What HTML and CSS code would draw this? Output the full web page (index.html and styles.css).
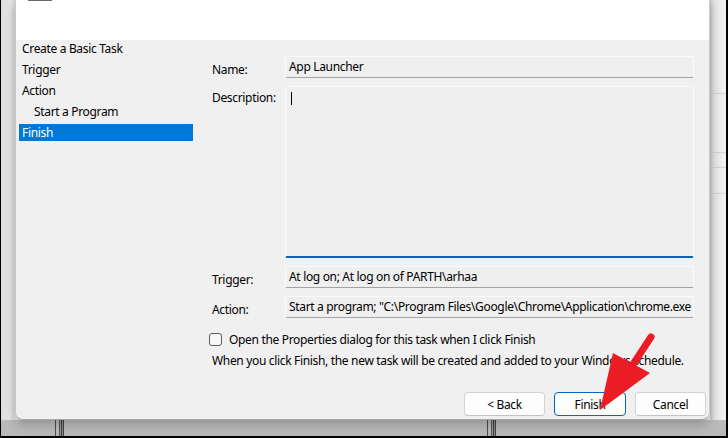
FILE: index.html
```html
<!DOCTYPE html>
<html>
<head>
<meta charset="utf-8">
<title>Create Basic Task Wizard</title>
<link rel="stylesheet" href="styles.css">
</head>
<body>
<div class="screen">
  <div class="top-row">
    <div class="left-edge"></div>
    <div class="dialog">
      <div class="header"><span class="header-mark"></span></div>
      <div class="body">
        <nav class="nav">
          <div class="nav-item">Create a Basic Task</div>
          <div class="nav-item">Trigger</div>
          <div class="nav-item">Action</div>
          <div class="nav-item sub">Start a Program</div>
          <div class="nav-item active">Finish</div>
        </nav>
        <main class="content">
          <div class="form">
            <div class="lbl">Name:</div>
            <div class="field">App Launcher</div>
            <div class="lbl lbl-desc">Description:</div>
            <div class="field desc"><span class="caret"></span></div>
            <div class="lbl">Trigger:</div>
            <div class="field">At log on; At log on of PARTH\arhaa</div>
            <div class="lbl">Action:</div>
            <div class="field">Start a program; "C:\Program Files\Google\Chrome\Application\chrome.exe</div>
          </div>
          <div class="check-row"><span class="checkbox"></span><span>Open the Properties dialog for this task when I click Finish</span></div>
          <p class="note">When you click Finish, the new task will be created and added to your Windows schedule.</p>
          <div class="buttons">
            <button class="btn btn-back">&lt; Back</button>
            <button class="btn btn-finish">Finish</button>
            <button class="btn btn-cancel">Cancel</button>
          </div>
        </main>
      </div>
    </div>
    <div class="right-edge"></div>
  </div>
  <div class="bottom-strip"></div>
  <svg class="arrow" width="728" height="438" viewBox="0 0 728 438">
    <line x1="651" y1="337" x2="628" y2="372" stroke="#ec1c24" stroke-width="7" stroke-linecap="round"/>
    <polygon points="613,353 650,373 600,410" fill="#ec1c24"/>
  </svg>
</div>
</body>
</html>
```

FILE: styles.css
```css
* { box-sizing: border-box; }
html, body { margin: 0; padding: 0; }
body {
  font-family: "Noto Sans", "Open Sans", sans-serif;
  font-size: 12px;
  letter-spacing: -0.33px;
  color: #000;
  background: #000;
}
.screen {
  position: relative;
  width: 728px;
  height: 438px;
  border-left: 1px solid #000;
  border-right: 2px solid #000;
  border-bottom: 2px solid #000;
  background: #e9e9e9;
  display: flex;
  flex-direction: column;
  overflow: hidden;
}
.top-row {
  display: flex;
  height: 420px;
}
.left-edge {
  width: 14px;
  background: linear-gradient(90deg, #dedede, #e6e6e6 60%, #dadada);
}
.right-edge {
  flex: 1;
  background:
    linear-gradient(#d3d3d3, #d3d3d3) 0 93px / 100% 1px no-repeat,
    linear-gradient(#d3d3d3, #d3d3d3) 0 152px / 100% 1px no-repeat,
    linear-gradient(#d3d3d3, #d3d3d3) 0 167px / 100% 1px no-repeat,
    linear-gradient(#d3d3d3, #d3d3d3) 0 193px / 100% 1px no-repeat,
    linear-gradient(90deg, #c8c8c8, #e4e4e4 4px, #ececec 60%, #f2f2f2);
}
.dialog {
  position: relative;
  z-index: 1;
  width: 695px;
  height: 420px;
  background: #f0f0f0;
  border-left: 1px solid #cacaca;
  border-right: 1px solid #cacaca;
  border-bottom: 1px solid #a8a8a8;
  border-radius: 0 0 8px 8px;
  box-shadow: 0 4px 12px rgba(0,0,0,0.25);
  display: flex;
  flex-direction: column;
}
.header {
  height: 40px;
  background: #fff;
  flex: none;
}
.header-mark {
  display: block;
  margin-left: 12px;
  width: 24px;
  height: 1px;
  background: #6a6a6a;
}
.body {
  flex: 1;
  display: flex;
}
.nav {
  width: 177px;
  padding-left: 3px;
  flex: none;
}
.nav-item {
  height: 17px;
  line-height: 17px;
  padding-left: 3px;
  margin-bottom: 4px;
  white-space: nowrap;
}
.nav-item.sub { padding-left: 15px; }
.nav-item.active {
  background: #0078d7;
  color: #fff;
}
.content {
  flex: 1;
  padding-left: 19px;
  padding-top: 16px;
}
.form {
  display: grid;
  grid-template-columns: 73px 409px;
  grid-template-rows: 22px 172px 22px 22px;
  row-gap: 8px;
}
.lbl {
  line-height: 17px;
  padding-top: 5px;
  white-space: nowrap;
}
.lbl.lbl-desc { padding-top: 3px; }
.field {
  height: 22px;
  line-height: 20px;
  padding: 0 2px 0 3px;
  background: #efefef;
  border: 1px solid #fafafa;
  border-bottom-color: #a3a3a3;
  border-radius: 2px;
  white-space: nowrap;
  overflow: hidden;
}
.field.desc {
  height: 172px;
  border-bottom: 2px solid #0067c0;
  padding-top: 5px;
}
.caret {
  display: block;
  margin-left: 2px;
  width: 1px;
  height: 13px;
  background: #000;
}
.check-row {
  display: flex;
  align-items: center;
  height: 17px;
  margin-top: 13px;
  margin-left: -3px;
}
.checkbox {
  width: 13px;
  height: 13px;
  border: 1px solid #5c5c5c;
  border-radius: 3px;
  background: #f7f7f7;
  margin-right: 7px;
}
.note {
  margin: 4px 0 0;
  line-height: 17px;
  white-space: nowrap;
}
.buttons {
  display: flex;
  justify-content: flex-end;
  margin-top: 23px;
  padding-right: 3px;
}
.btn {
  height: 24px;
  font: inherit;
  letter-spacing: inherit;
  color: #000;
  background: #fdfdfd;
  border: 1px solid #d3d3d3;
  border-bottom-color: #c2c2c2;
  border-radius: 4px;
  padding: 0;
}
.btn-back { width: 81px; }
.btn-finish { width: 72px; margin-left: 9px; border-color: #0067c0; }
.btn-cancel { width: 71px; margin-left: 9px; }
.bottom-strip {
  height: 16px;
  background:
    linear-gradient(#4c4c4c, #4c4c4c) 54px 0 / 1px 100% no-repeat,
    linear-gradient(90deg, #555 0 1px, #9a9a9a 1px 2px, #3e3e3e 2px 3px, #8a8a8a 3px 4px, #444 4px 5px) 58px 0 / 5px 100% no-repeat,
    linear-gradient(#4c4c4c, #4c4c4c) 486px 0 / 1px 100% no-repeat,
    linear-gradient(90deg, #555 0 1px, #9a9a9a 1px 2px, #3e3e3e 2px 3px, #8a8a8a 3px 4px, #444 4px 5px) 490px 0 / 5px 100% no-repeat,
    linear-gradient(#bcbcbc, #b8b8b8);
}
.arrow {
  position: absolute;
  left: -1px;
  top: 0;
  z-index: 5;
  pointer-events: none;
}
```
